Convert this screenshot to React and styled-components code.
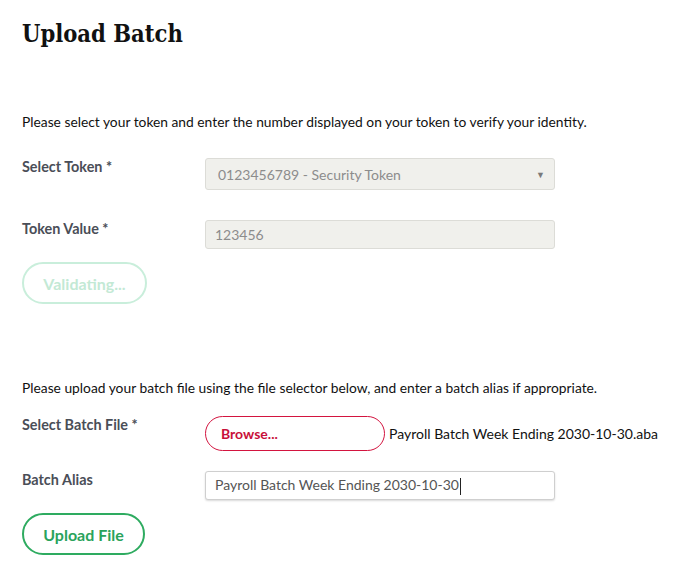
import React from "react";
import styled, { createGlobalStyle } from "styled-components";

const Global = createGlobalStyle`
  html, body { margin: 0; padding: 0; background: #fff; }
  body { font-family: Lato, "Noto Sans", sans-serif; color: #111; }
  * { box-sizing: border-box; }
`;

const Page = styled.div`
  padding: 17px 0 0 22px;
  width: 674px;
`;

const Title = styled.h1`
  margin: 0;
  font-family: "DejaVu Serif Condensed", "DejaVu Serif", serif;
  font-weight: 700;
  font-size: 23.5px;
  line-height: 34px;
  color: #111;
`;

const Intro = styled.p`
  margin: ${(p) => p.$top}px 0 0;
  font-size: 13.8px;
  line-height: 18px;
  color: #111;
`;

const Row = styled.div`
  display: flex;
  align-items: flex-start;
  margin-top: ${(p) => p.$top}px;
`;

const Label = styled.div`
  width: 183px;
  flex: none;
  font-size: 14.4px;
  font-weight: 700;
  line-height: 18px;
  color: #4a4e57;
`;

const Field = styled.div`
  width: 350px;
  height: ${(p) => p.$h}px;
  display: flex;
  align-items: center;
  justify-content: space-between;
  padding: 0 ${(p) => p.$pr || 9}px 0 ${(p) => p.$pl || 9}px;
  font-size: 14px;
  border-radius: 3px;
  background: ${(p) => (p.$disabled ? "#f0f0ec" : "#fff")};
  border: 1px solid ${(p) => (p.$disabled ? "#dcdcd7" : "#cfcfcf")};
  color: ${(p) => (p.$disabled ? "#8c8c8c" : "#555")};
  box-shadow: ${(p) => (p.$disabled ? "none" : "0 1px 2px rgba(0,0,0,0.15)")};
`;

const Arrow = styled.span`
  font-size: 9px;
  color: #7a7a7a;
`;

const Caret = styled.span`
  display: inline-block;
  width: 1px;
  height: 17px;
  background: #222;
  vertical-align: middle;
  margin-left: 1px;
`;

const PillButton = styled.button`
  display: block;
  margin-top: ${(p) => p.$top}px;
  width: ${(p) => p.$w}px;
  height: 42px;
  border-radius: 21px;
  background: #fff;
  border: 2px solid ${(p) => p.$border};
  color: ${(p) => p.$color};
  font-family: Lato, "Noto Sans", sans-serif;
  font-weight: 700;
  font-size: 16px;
  padding: 0;
  cursor: pointer;
`;

const FileWrap = styled.div`
  display: flex;
  align-items: center;
  gap: 4px;
`;

const Browse = styled.button`
  width: 180px;
  height: 35px;
  border-radius: 18px;
  border: 1px solid #d3143f;
  background: #fff;
  color: #c8103a;
  font-family: Lato, "Noto Sans", sans-serif;
  font-weight: 700;
  font-size: 14px;
  text-align: left;
  padding: 0 0 0 15px;
`;

const FileName = styled.span`
  font-size: 14px;
  color: #111;
`;

export default function App() {
  return (
    <>
      <Global />
      <Page>
        <Title>Upload Batch</Title>
        <Intro $top={62}>
          Please select your token and enter the number displayed on your token to verify your identity.
        </Intro>
        <Row $top={27}>
          <Label>Select Token *</Label>
          <Field $h={32} $disabled $pl={12}>
            <span>0123456789 - Security Token</span>
            <Arrow>▼</Arrow>
          </Field>
        </Row>
        <Row $top={30}>
          <Label>Token Value *</Label>
          <Field $h={29} $disabled>
            <span>123456</span>
          </Field>
        </Row>
        <PillButton $top={13} $w={125} $border="#c9eedb" $color="#c3e9d5">
          Validating...
        </PillButton>
        <Intro $top={75}>
          Please upload your batch file using the file selector below, and enter a batch alias if appropriate.
        </Intro>
        <Row $top={19}>
          <Label>Select Batch File *</Label>
          <FileWrap>
            <Browse>Browse...</Browse>
            <FileName>Payroll Batch Week Ending 2030-10-30.aba</FileName>
          </FileWrap>
        </Row>
        <Row $top={20}>
          <Label>Batch Alias</Label>
          <Field $h={29}>
            <span>
              Payroll Batch Week Ending 2030-10-30
              <Caret />
            </span>
          </Field>
        </Row>
        <PillButton $top={13} $w={123} $border="#2eab60" $color="#2aa35c">
          Upload File
        </PillButton>
      </Page>
    </>
  );
}
